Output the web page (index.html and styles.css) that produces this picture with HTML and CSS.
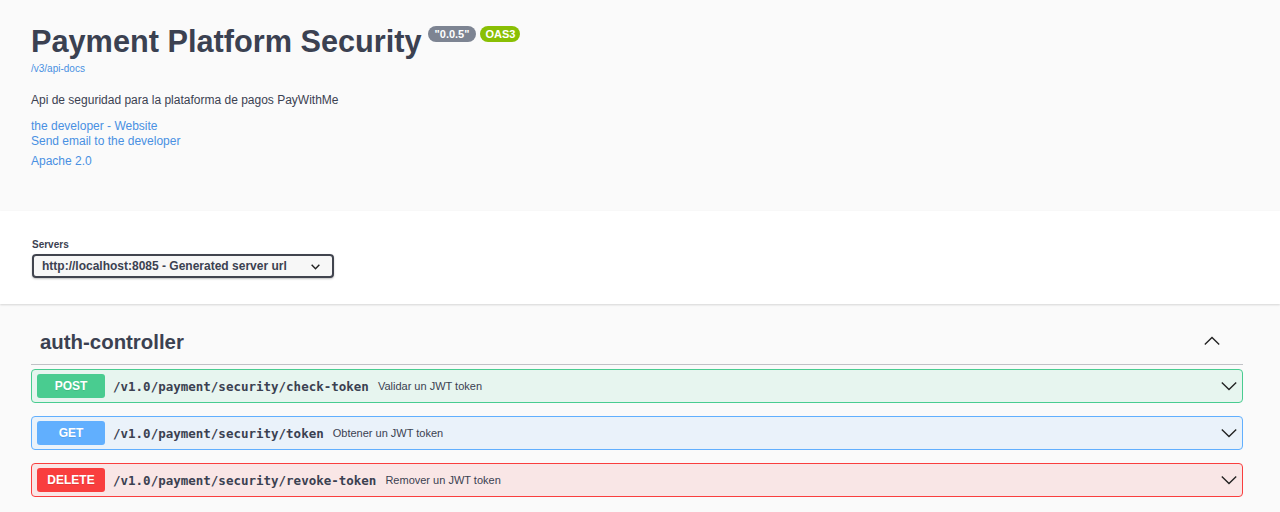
FILE: index.html
```html
<!DOCTYPE html>
<html lang="es">
<head>
<meta charset="utf-8">
<title>Payment Platform Security</title>
<link rel="stylesheet" href="styles.css">
</head>
<body>
<section class="info">
  <div class="wrap">
    <div class="title-row">
      <h2 class="title">Payment Platform Security</h2>
      <span class="badge badge-version">"0.0.5"</span>
      <span class="badge badge-oas">OAS3</span>
    </div>
    <a class="url" href="#">/v3/api-docs</a>
    <p class="desc">Api de seguridad para la plataforma de pagos PayWithMe</p>
    <div class="contact">
      <a href="#">the developer - Website</a>
      <a href="#">Send email to the developer</a>
    </div>
    <a class="license" href="#">Apache 2.0</a>
  </div>
</section>

<section class="schemes">
  <div class="wrap">
    <label class="servers-label">Servers</label>
    <div class="select">
      <span>http://localhost:8085 - Generated server url</span>
      <svg class="sel-arrow" viewBox="0 0 20 20" width="11" height="11"><polyline points="3,7 10,14 17,7" fill="none" stroke="#222" stroke-width="2.6"/></svg>
    </div>
  </div>
</section>

<section class="tags">
  <div class="wrap">
    <div class="tag">
      <h4>auth-controller</h4>
      <svg class="chev-up" viewBox="0 0 20 20" width="18" height="18"><polyline points="2,14 10,6 18,14" fill="none" stroke="#222" stroke-width="1.5"/></svg>
    </div>

    <div class="opblock post">
      <span class="method">POST</span>
      <span class="path">/v1.0/payment/security/check-token</span>
      <span class="summary">Validar un JWT token</span>
      <svg class="chev" viewBox="0 0 20 20" width="18" height="18"><polyline points="2,6 10,14 18,6" fill="none" stroke="#222" stroke-width="1.5"/></svg>
    </div>

    <div class="opblock get">
      <span class="method">GET</span>
      <span class="path">/v1.0/payment/security/token</span>
      <span class="summary">Obtener un JWT token</span>
      <svg class="chev" viewBox="0 0 20 20" width="18" height="18"><polyline points="2,6 10,14 18,6" fill="none" stroke="#222" stroke-width="1.5"/></svg>
    </div>

    <div class="opblock delete">
      <span class="method">DELETE</span>
      <span class="path">/v1.0/payment/security/revoke-token</span>
      <span class="summary">Remover un JWT token</span>
      <svg class="chev" viewBox="0 0 20 20" width="18" height="18"><polyline points="2,6 10,14 18,6" fill="none" stroke="#222" stroke-width="1.5"/></svg>
    </div>
  </div>
</section>
</body>
</html>
```

FILE: styles.css
```css
* { box-sizing: border-box; }

html, body {
  margin: 0;
  padding: 0;
  background: #fafafa;
  font-family: "Liberation Sans", Arial, sans-serif;
  color: #3b4151;
}

a { color: #4990e2; text-decoration: none; }

.wrap {
  padding: 0 37px 0 31px;
}

/* info */
.info {
  height: 211px;
  background: #fafafa;
}

.info .wrap {
  display: flex;
  flex-direction: column;
  align-items: flex-start;
  padding-top: 24px;
}

.title-row {
  display: flex;
  align-items: flex-start;
  gap: 4px;
}

.title {
  margin: 0 2px 0 0;
  font-size: 30.7px;
  line-height: 36px;
  font-weight: bold;
  color: #3b4151;
}

.badge {
  margin-top: 2px;
  font-size: 11px;
  line-height: 12px;
  font-weight: bold;
  color: #fff;
  padding: 2px 7px;
  border-radius: 10px;
}

.badge-version { background: #7d8492; }
.badge-oas { background: #89bf04; padding: 2px 5px; }

.url {
  margin-top: 2px;
  font-size: 10px;
  line-height: 14px;
}

.desc {
  margin: 16px 0 0;
  font-size: 12px;
  line-height: 16px;
  color: #3b4151;
}

.contact {
  display: flex;
  flex-direction: column;
  margin-top: 11px;
  font-size: 12px;
  line-height: 15px;
}

.license {
  margin-top: 5px;
  font-size: 12px;
  line-height: 15px;
}

/* schemes */
.schemes {
  background: #fff;
  box-shadow: 0 1px 2px 0 rgba(0, 0, 0, 0.15);
  height: 93px;
  position: relative;
}

.schemes .wrap {
  padding-top: 28px;
  display: flex;
  flex-direction: column;
  align-items: flex-start;
}

.servers-label {
  font-size: 10px;
  line-height: 12px;
  font-weight: bold;
  color: #3b4151;
  padding-left: 1px;
}

.select {
  margin-top: 3px;
  margin-left: 1px;
  width: 302px;
  height: 24px;
  border: 2px solid #41444e;
  border-radius: 4px;
  background: #f7f7f7;
  box-shadow: 0 1px 2px 0 rgba(0, 0, 0, 0.25);
  display: flex;
  align-items: center;
  justify-content: space-between;
  padding: 0 11px 0 8px;
  font-size: 12px;
  font-weight: bold;
  color: #3b4151;
}

/* tags */
.tags .wrap {
  padding-top: 24px;
}

.tag {
  display: flex;
  align-items: center;
  justify-content: space-between;
  padding: 0 22px 8px 9px;
  border-bottom: 1px solid rgba(59, 65, 81, 0.3);
  margin-bottom: 4px;
}

.tag h4 {
  margin: 0;
  font-size: 20.4px;
  line-height: 28px;
  font-weight: bold;
  color: #3b4151;
}

.chev-up { margin-top: -2px; }

.opblock {
  display: flex;
  align-items: center;
  height: 34px;
  padding: 0 4px 0 5px;
  border: 1px solid;
  border-radius: 4px;
  margin-bottom: 13px;
}

.method {
  width: 68px;
  height: 24px;
  line-height: 24px;
  text-align: center;
  border-radius: 3px;
  color: #fff;
  font-size: 12px;
  font-weight: bold;
  text-shadow: 0 1px 0 rgba(0, 0, 0, 0.1);
  margin-right: 8px;
  flex: none;
}

.path {
  font-family: "DejaVu Sans Mono", "Liberation Mono", monospace;
  font-weight: bold;
  font-size: 12.5px;
  color: #3b4151;
  margin-right: 9px;
}

.summary {
  font-size: 11px;
  color: #3b4151;
  flex: 1;
}

.chev { flex: none; }

.post { border-color: #49cc90; background: rgba(73, 204, 144, 0.1); }
.post .method { background: #49cc90; }

.get { border-color: #61affe; background: rgba(97, 175, 254, 0.1); }
.get .method { background: #61affe; }

.delete { border-color: #f93e3e; background: rgba(249, 62, 62, 0.1); }
.delete .method { background: #f93e3e; }
```
